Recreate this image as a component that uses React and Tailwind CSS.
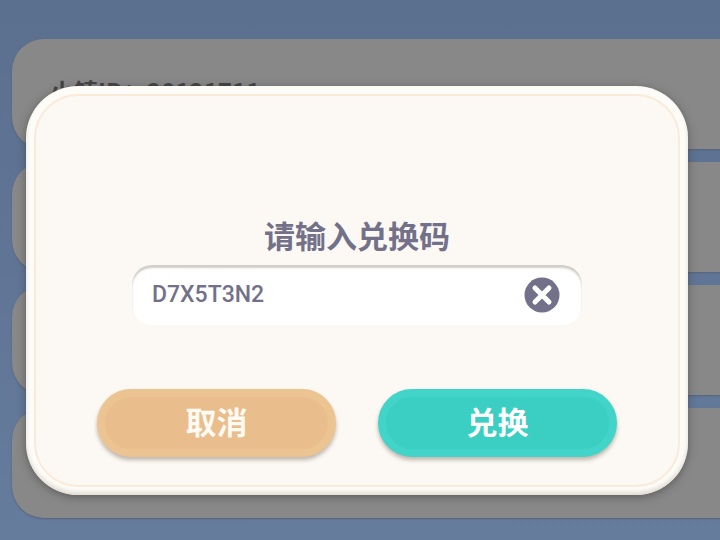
import { useState } from "react";

const rows = ["小镇ID：20121711", "", "", ""];

export default function App() {
  const [code, setCode] = useState("D7X5T3N2");

  return (
    <div
      className="relative min-h-screen overflow-hidden bg-linear-to-b from-[#5b6f8f] to-[#667c9d]"
      style={{ fontFamily: "'Noto Sans CJK SC', sans-serif" }}
    >
      {/* Settings list under the dimmed overlay */}
      <ul className="flex flex-col gap-[13px] pt-[39px] pl-3">
        {rows.map((row, i) => (
          <li
            key={i}
            className="h-[110px] rounded-l-[32px] bg-[#888888] shadow-[0_1px_2px_#56617a] pl-[38px] pt-9 text-2xl leading-8 font-bold text-[#444444]"
          >
            {row}
          </li>
        ))}
      </ul>

      {/* Redeem dialog */}
      <div className="absolute inset-0 flex items-start pt-[86px] pl-[26px] pr-8">
        <form
          role="dialog"
          aria-labelledby="redeem-title"
          onSubmit={(e) => e.preventDefault()}
          className="w-full rounded-[52px] bg-[#fdfcf8] p-2 shadow-[0_2px_8px_rgba(50,50,50,0.5),inset_0_-3px_4px_#e0dbd2]"
        >
          <div className="flex flex-col items-center rounded-[44px] border-2 border-[#fbead8] bg-[#fcf9f4] px-[61px] pt-[118px] pb-7">
            <label
              id="redeem-title"
              htmlFor="code"
              className="text-[31px] leading-[42px] font-bold text-[#737189]"
            >
              请输入兑换码
            </label>

            <div className="mt-[9px] flex h-[60px] w-[450px] max-w-full items-center rounded-[20px] bg-white pl-5 pr-[22px] shadow-[inset_0_3px_2px_#cfcfc9]">
              <input
                id="code"
                type="text"
                value={code}
                onChange={(e) => setCode(e.target.value)}
                className="min-w-0 flex-1 bg-transparent text-[23px] font-medium text-[#737189] outline-none"
                style={{ fontFamily: "Roboto, 'Noto Sans CJK SC', sans-serif" }}
              />
              <button type="button" aria-label="清除" onClick={() => setCode("")}>
                <svg width="36" height="36" viewBox="0 0 36 36">
                  <circle cx="18" cy="18" r="17.5" fill="#737189" />
                  <path d="M11 11 25 25M25 11 11 25" stroke="#fff" strokeWidth="5" strokeLinecap="round" />
                </svg>
              </button>
            </div>

            <div className="mt-16 flex w-full justify-between">
              <button
                type="button"
                className="h-[68px] w-[239px] rounded-full border-8 border-[#ecc492] bg-[#e9bd8c] pb-1 text-[31px] leading-[42px] font-bold text-[#fffaf2] shadow-[0_3px_4px_#bdb6ad]"
              >
                取消
              </button>
              <button
                type="submit"
                className="h-[68px] w-[239px] rounded-full border-8 border-[#42d3c9] bg-[#3bcec2] pb-1 text-[31px] leading-[42px] font-bold text-white shadow-[0_3px_4px_#bdb6ad]"
              >
                兑换
              </button>
            </div>
          </div>
        </form>
      </div>
    </div>
  );
}
